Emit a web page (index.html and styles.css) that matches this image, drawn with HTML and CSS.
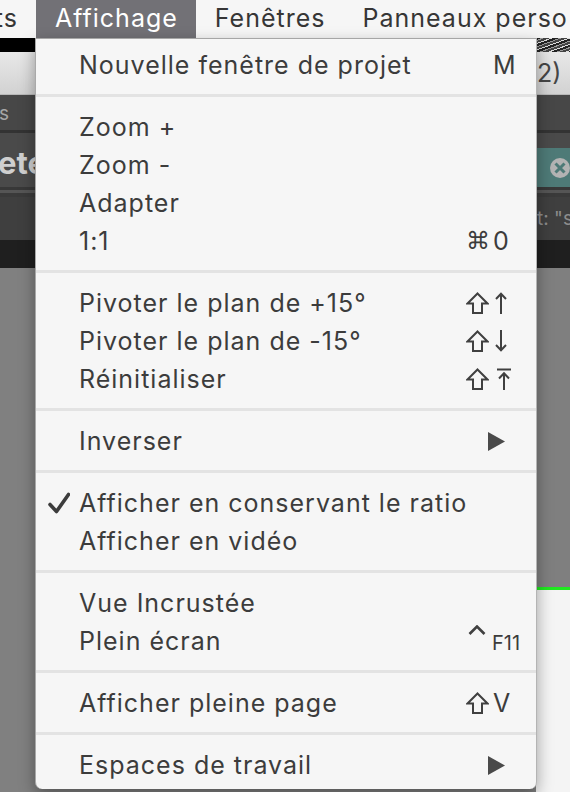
FILE: index.html
```html
<!DOCTYPE html>
<html lang="fr">
<head>
    <meta charset="UTF-8">
    <meta name="viewport" content="width=device-width, initial-scale=1.0">
    <title>Affichage</title>
    <link rel="stylesheet" href="styles.css">
</head>
<body>
<div class="screen">
    <div class="menubar">
        <div class="mb-cut"><span class="mb-item">Effets</span></div>
        <span class="mb-item active">Affichage</span>
        <span class="mb-item">Fenêtres</span>
        <span class="mb-item">Panneaux perso</span>
    </div>

    <!-- application behind the menu -->
    <div class="band strip-black"><div class="noise"></div></div>
    <div class="band toolbar"><span class="side-r tb-text">2)</span></div>
    <div class="band panel-head"><div class="cut cut-s"><span>Effets</span></div></div>
    <div class="band panel-line"></div>
    <div class="band title">
        <span class="title-text">eter</span>
        <div class="teal">
            <svg width="22" height="22" viewBox="0 0 22 22"><circle cx="11" cy="11" r="10" fill="#b3b3b3"/><path d="M6.5 6.5 L15.5 15.5 M15.5 6.5 L6.5 15.5" stroke="#4e7a77" stroke-width="3"/></svg>
        </div>
    </div>
    <div class="band stripes"></div>
    <div class="band props"><span class="side-r props-text">t: "s</span></div>
    <div class="band dark"></div>
    <div class="work">
        <div class="work-left"></div>
        <div class="work-right">
            <div class="canvas-gray"></div>
            <div class="canvas-green"></div>
            <div class="canvas-white"></div>
        </div>
    </div>

    <div class="menu">
        <div class="item"><span class="check"></span><span class="label">Nouvelle fenêtre de projet</span><span class="keys"><span class="mod"></span><span class="key">M</span></span></div>
        <div class="sep"></div>
        <div class="item"><span class="check"></span><span class="label">Zoom +</span><span class="keys"></span></div>
        <div class="item"><span class="check"></span><span class="label">Zoom -</span><span class="keys"></span></div>
        <div class="item"><span class="check"></span><span class="label">Adapter</span><span class="keys"></span></div>
        <div class="item"><span class="check"></span><span class="label">1:1</span><span class="keys"><span class="mod cmd">⌘</span><span class="key">0</span></span></div>
        <div class="sep"></div>
        <div class="item"><span class="check"></span><span class="label">Pivoter le plan de +15°</span>
            <span class="keys">
                <span class="mod"><svg class="shift" width="23" height="22" viewBox="0 0 23 22"><polygon points="11.5,1.5 21.5,11.5 16,11.5 16,21 7,21 7,11.5 1.5,11.5"/></svg></span>
                <span class="key"><svg class="arrow" width="12" height="22" viewBox="0 0 12 22"><path d="M6 2 V22 M1 7 L6 1.8 L11 7"/></svg></span>
            </span>
        </div>
        <div class="item"><span class="check"></span><span class="label">Pivoter le plan de -15°</span>
            <span class="keys">
                <span class="mod"><svg class="shift" width="23" height="22" viewBox="0 0 23 22"><polygon points="11.5,1.5 21.5,11.5 16,11.5 16,21 7,21 7,11.5 1.5,11.5"/></svg></span>
                <span class="key"><svg class="arrow" width="12" height="22" viewBox="0 0 12 22"><path d="M6 0 V20 M1 15 L6 20.2 L11 15"/></svg></span>
            </span>
        </div>
        <div class="item"><span class="check"></span><span class="label">Réinitialiser</span>
            <span class="keys">
                <span class="mod"><svg class="shift" width="23" height="22" viewBox="0 0 23 22"><polygon points="11.5,1.5 21.5,11.5 16,11.5 16,21 7,21 7,11.5 1.5,11.5"/></svg></span>
                <span class="key"><svg class="arrow top" width="16" height="22" viewBox="0 0 16 22"><path d="M1 1.5 H15 M8 5.5 V22 M3 10.5 L8 5.3 L13 10.5"/></svg></span>
            </span>
        </div>
        <div class="sep"></div>
        <div class="item"><span class="check"></span><span class="label">Inverser</span><span class="keys"><svg class="sub" width="17" height="19" viewBox="0 0 17 19"><polygon points="0,0 17,9.5 0,19"/></svg></span></div>
        <div class="sep"></div>
        <div class="item"><span class="check"><svg width="22" height="22" viewBox="0 0 22 22"><path d="M2 12.5 L8.5 19.5 L20.5 2.5"/></svg></span><span class="label">Afficher en conservant le ratio</span><span class="keys"></span></div>
        <div class="item"><span class="check"></span><span class="label">Afficher en vidéo</span><span class="keys"></span></div>
        <div class="sep"></div>
        <div class="item"><span class="check"></span><span class="label">Vue Incrustée</span><span class="keys"></span></div>
        <div class="item"><span class="check"></span><span class="label">Plein écran</span>
            <span class="keys">
                <span class="mod"><svg class="caret" width="18" height="10" viewBox="0 0 18 10"><path d="M1.5 9 L9 1.5 L16.5 9"/></svg></span>
                <span class="key fkey">F11</span>
            </span>
        </div>
        <div class="sep"></div>
        <div class="item"><span class="check"></span><span class="label">Afficher pleine page</span>
            <span class="keys">
                <span class="mod"><svg class="shift" width="23" height="22" viewBox="0 0 23 22"><polygon points="11.5,1.5 21.5,11.5 16,11.5 16,21 7,21 7,11.5 1.5,11.5"/></svg></span>
                <span class="key">V</span>
            </span>
        </div>
        <div class="sep"></div>
        <div class="item"><span class="check"></span><span class="label">Espaces de travail</span><span class="keys"><svg class="sub" width="17" height="19" viewBox="0 0 17 19"><polygon points="0,0 17,9.5 0,19"/></svg></span></div>
    </div>
</div>
</body>
</html>
```

FILE: styles.css
```css
body {
    margin: 0;
    background-color: #808080;
    font-family: Inter, 'Noto Sans', sans-serif;
}

.screen {
    position: relative;
    width: 570px;
    height: 792px;
    overflow: hidden;
}

/* menu bar */
.menubar {
    display: flex;
    height: 38px;
    background-color: #f6f6f6;
    font-size: 25px;
    letter-spacing: 1px;
    color: #363636;
    white-space: nowrap;
}

.mb-item {
    display: flex;
    align-items: center;
    flex-shrink: 0;
    padding: 0 18px 3px 19px;
}

.mb-item.active {
    background-color: #727176;
    color: #fff;
}

.mb-cut {
    display: flex;
    justify-content: flex-end;
    width: 36px;
    flex-shrink: 0;
    overflow: hidden;
}

/* background application */
.band {
    display: flex;
    justify-content: space-between;
    align-items: center;
    overflow: hidden;
    white-space: nowrap;
}

.side-r {
    margin-left: auto;
    width: 33px;
    flex-shrink: 0;
}

.strip-black {
    height: 14px;
    background-color: #000;
    align-items: stretch;
}

.noise {
    margin-left: auto;
    width: 34px;
    background: repeating-linear-gradient(160deg, #222 0 2px, #9a9a9a 2px 3px, #444 3px 5px, #ddd 5px 6px);
}

.toolbar {
    height: 43px;
    background: linear-gradient(#e8e8e8, #d2d2d2);
    border-bottom: 1px solid #b8b8b8;
    box-sizing: border-box;
}

.tb-text {
    font-size: 25px;
    color: #454545;
}

.panel-head {
    height: 35px;
    background-color: #474747;
}

.cut {
    display: flex;
    justify-content: flex-end;
    overflow: hidden;
    flex-shrink: 0;
}

.cut-s {
    width: 9px;
    font-size: 19px;
    color: #a6a6a6;
    padding-top: 2px;
}

.panel-line {
    height: 3px;
    background-color: #333;
}

.title {
    height: 54px;
    background-color: #4a4a4a;
    align-items: flex-end;
}

.title-text {
    align-self: center;
    margin-left: -2px;
    font-size: 31px;
    font-weight: bold;
    color: #cfcfcf;
    padding-top: 4px;
}

.teal {
    display: flex;
    align-items: center;
    justify-content: flex-end;
    width: 34px;
    height: 39px;
    background-color: #4e7a77;
}

.teal svg {
    margin-right: -1px;
}

.stripes {
    height: 10px;
    background: linear-gradient(#383838 0 3px, #555 3px 6px, #3a3a3a 6px);
}

.props {
    height: 43px;
    background-color: #3f3f3f;
}

.props-text {
    font-size: 19px;
    color: #8c8c8c;
}

.dark {
    height: 28px;
    background-color: #1f1f1f;
}

.work {
    display: flex;
    height: 524px;
}

.work-left {
    flex: 1;
    background-color: #808080;
}

.work-right {
    display: flex;
    flex-direction: column;
    width: 34px;
}

.canvas-gray {
    height: 319px;
    background-color: #7f7f7f;
}

.canvas-green {
    height: 3px;
    background-color: #1fea1f;
}

.canvas-white {
    flex: 1;
    background-color: #f4f4f4;
}

/* the dropdown menu */
.menu {
    position: absolute;
    top: 38px;
    left: 35px;
    width: 500px;
    padding: 7px 0 5px;
    background-color: #f6f6f6;
    border-top: 1px solid #a6a6a6;
    border-left: 1px solid #a9a9a9;
    border-right: 1px solid #b4b4b4;
    border-radius: 0 0 7px 7px;
    box-shadow: 0 6px 16px rgba(0, 0, 0, 0.35);
    font-size: 25px;
    color: #3c3c3c;
}

.item {
    display: grid;
    grid-template-columns: 43px 1fr 70px;
    align-items: center;
    height: 38px;
    white-space: nowrap;
}

.label {
    letter-spacing: 1px;
}

.check {
    display: flex;
    justify-content: flex-end;
    padding-right: 9px;
}

.check svg {
    fill: none;
    stroke: #3c3c3c;
    stroke-width: 3.6;
    stroke-linecap: round;
    stroke-linejoin: round;
}

.sep {
    height: 3px;
    margin: 10px 0 11px;
    background-color: #e3e3e3;
}

.keys {
    display: flex;
    align-items: center;
}

.mod {
    display: flex;
    align-items: center;
    width: 27px;
    flex-shrink: 0;
}

.key {
    display: flex;
    align-items: center;
}

.cmd {
    font-family: 'DejaVu Sans', sans-serif;
    font-size: 24px;
}

.shift polygon {
    fill: none;
    stroke: #404040;
    stroke-width: 2;
}

.arrow {
    margin-left: 2px;
}

.arrow path,
.caret path {
    fill: none;
    stroke: #404040;
    stroke-width: 2;
}

.arrow.top {
    margin-left: 3px;
}

.caret {
    margin-left: 2px;
    margin-bottom: 22px;
}

.caret path {
    stroke-width: 2.6;
}

.fkey {
    font-size: 20px;
    padding-top: 4px;
    margin-left: -1px;
}

.sub {
    margin-left: 22px;
    fill: #4a4a4a;
}
```
